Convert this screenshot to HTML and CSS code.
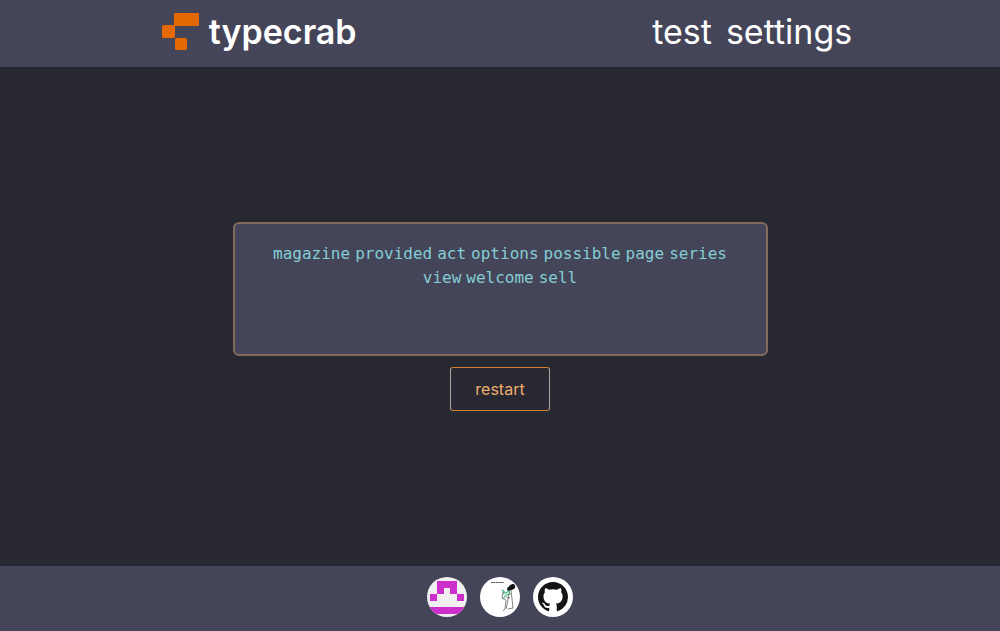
FILE: index.html
```html
<!DOCTYPE html>
<html lang="en">
<head>
<meta charset="utf-8">
<meta name="viewport" content="width=device-width, initial-scale=1">
<title>typecrab</title>
<link rel="stylesheet" href="styles.css">
</head>
<body>
<header class="header">
  <a class="brand" href="#">
    <svg class="brand-mark" viewBox="0 0 37 37" aria-hidden="true" fill="#e46804">
      <rect x="12" y="0" width="25" height="13" rx="1"/>
      <rect x="0" y="12" width="13" height="13" rx="1.500"/>
      <rect x="13" y="25" width="12" height="12" rx="1.500"/>
    </svg>
    <span>typecrab</span>
  </a>
  <nav class="nav">
    <a href="#">test</a>
    <a href="#">settings</a>
  </nav>
</header>
<main class="main">
  <div class="words">
    <span>magazine</span><span>provided</span><span>act</span><span>options</span><span>possible</span><span>page</span><span>series</span><span>view</span><span>welcome</span><span>sell</span>
  </div>
  <button class="restart" type="button">restart</button>
</main>
<footer class="footer">
  <a class="avatar" href="#" aria-label="Contributor">
    <svg viewBox="0 0 40 40" aria-hidden="true">
      <rect width="40" height="40" fill="#f0f0f0"/>
      <path fill="#cc2fcc" d="M10 4h20v13h7v7h-7v-7h-7v-6h-6v6h-7v7H3v-7h7zM3 30h34v7H3z"/>
    </svg>
  </a>
  <a class="avatar" href="#" aria-label="Contributor">
    <svg viewBox="0 0 40 40" aria-hidden="true">
      <rect width="40" height="40" fill="#fff"/>
      <path d="M11 5.500h13" stroke="#555" stroke-width="1.200" stroke-dasharray="2.500 .5 1.500 .4" fill="none"/>
      <ellipse cx="32" cy="10" rx="3.400" ry="2.600" fill="#111" transform="rotate(-30 32 10)"/>
      <circle cx="29" cy="12" r="2" fill="#111"/>
      <path d="M22 13l4 3 3-2 1 3-4 1-3 4M23 13l1 4" fill="none" stroke="#48b982" stroke-width="1.200"/>
      <path d="M23 15l-1 6 4 2-1 9-2 2M31 13l1 9 1 9-5 1M29 16l-1 7-2 9M26 20l4 1" fill="none" stroke="#666" stroke-width=".8"/>
    </svg>
  </a>
  <a class="avatar" href="#" aria-label="GitHub">
    <svg viewBox="0 0 40 40" aria-hidden="true">
      <rect width="40" height="40" fill="#fff"/>
      <path transform="translate(5 5) scale(1.875)" fill="#151314" d="M8 0C3.580 0 0 3.580 0 8c0 3.540 2.290 6.530 5.470 7.590.4.070.55-.17.55-.38 0-.19-.01-.82-.01-1.490-2.010.37-2.530-.49-2.690-.94-.09-.23-.48-.94-.82-1.130-.28-.15-.68-.52-.01-.53.63-.01 1.080.58 1.230.82.72 1.210 1.870.87 2.330.66.070-.52.28-.87.51-1.070-1.780-.2-3.640-.89-3.640-3.950 0-.87.31-1.590.82-2.150-.08-.2-.36-1.020.08-2.120 0 0 .67-.21 2.200.82.64-.18 1.320-.27 2-.27s1.360.09 2 .27c1.530-1.040 2.200-.82 2.200-.82.44 1.100.16 1.920.08 2.120.51.56.82 1.270.82 2.150 0 3.070-1.870 3.750-3.650 3.950.29.25.54.73.54 1.480 0 1.070-.01 1.930-.01 2.200 0 .21.15.46.55.38A8.010 8.010 0 0 0 16 8c0-4.420-3.580-8-8-8z"/>
    </svg>
  </a>
</footer>
</body>
</html>
```
FILE: styles.css
```css
* {
  box-sizing: border-box;
}

body {
  margin: 0;
  min-height: 100vh;
  display: flex;
  flex-direction: column;
  background: #272832;
  color: #fff;
  font-family: Inter, sans-serif;
}

a {
  color: inherit;
  text-decoration: none;
}

.header {
  display: flex;
  justify-content: space-around;
  align-items: center;
  padding: 8px 0 12px;
  background: #444558;
}

.brand {
  display: flex;
  align-items: center;
  gap: 10px;
  padding-left: 14px;
  font-size: 34px;
  line-height: 47px;
  font-weight: 600;
}

.brand-mark {
  width: 37px;
  height: 37px;
}

.nav {
  display: flex;
  gap: 14px;
  font-size: 34px;
  line-height: 47px;
}

.main {
  flex: 1;
  display: flex;
  flex-direction: column;
  align-items: center;
  justify-content: center;
  gap: 11px;
}

.words {
  display: flex;
  flex-wrap: wrap;
  justify-content: center;
  align-content: flex-start;
  column-gap: 5px;
  width: 53.5%;
  min-height: 134px;
  padding: 18px 36px;
  border: 2px solid #806b5c;
  border-radius: 6px;
  background: #444558;
  color: #84cdd5;
  font: 16px/24px "DejaVu Sans Mono", monospace;
}

.restart {
  padding: 9px 24px;
  border: 1px solid;
  border-color: #d27c2c #b6a59d;
  border-radius: 3px;
  background: transparent;
  color: #f0ad6c;
  font: 400 16px/24px Inter, sans-serif;
}

.footer {
  display: flex;
  justify-content: center;
  gap: 13px;
  padding: 11px 0 14px;
  background: #444558;
}

.avatar {
  width: 40px;
  height: 40px;
  border-radius: 50%;
  overflow: hidden;
}

.avatar svg {
  display: block;
  width: 100%;
  height: 100%;
}
```
